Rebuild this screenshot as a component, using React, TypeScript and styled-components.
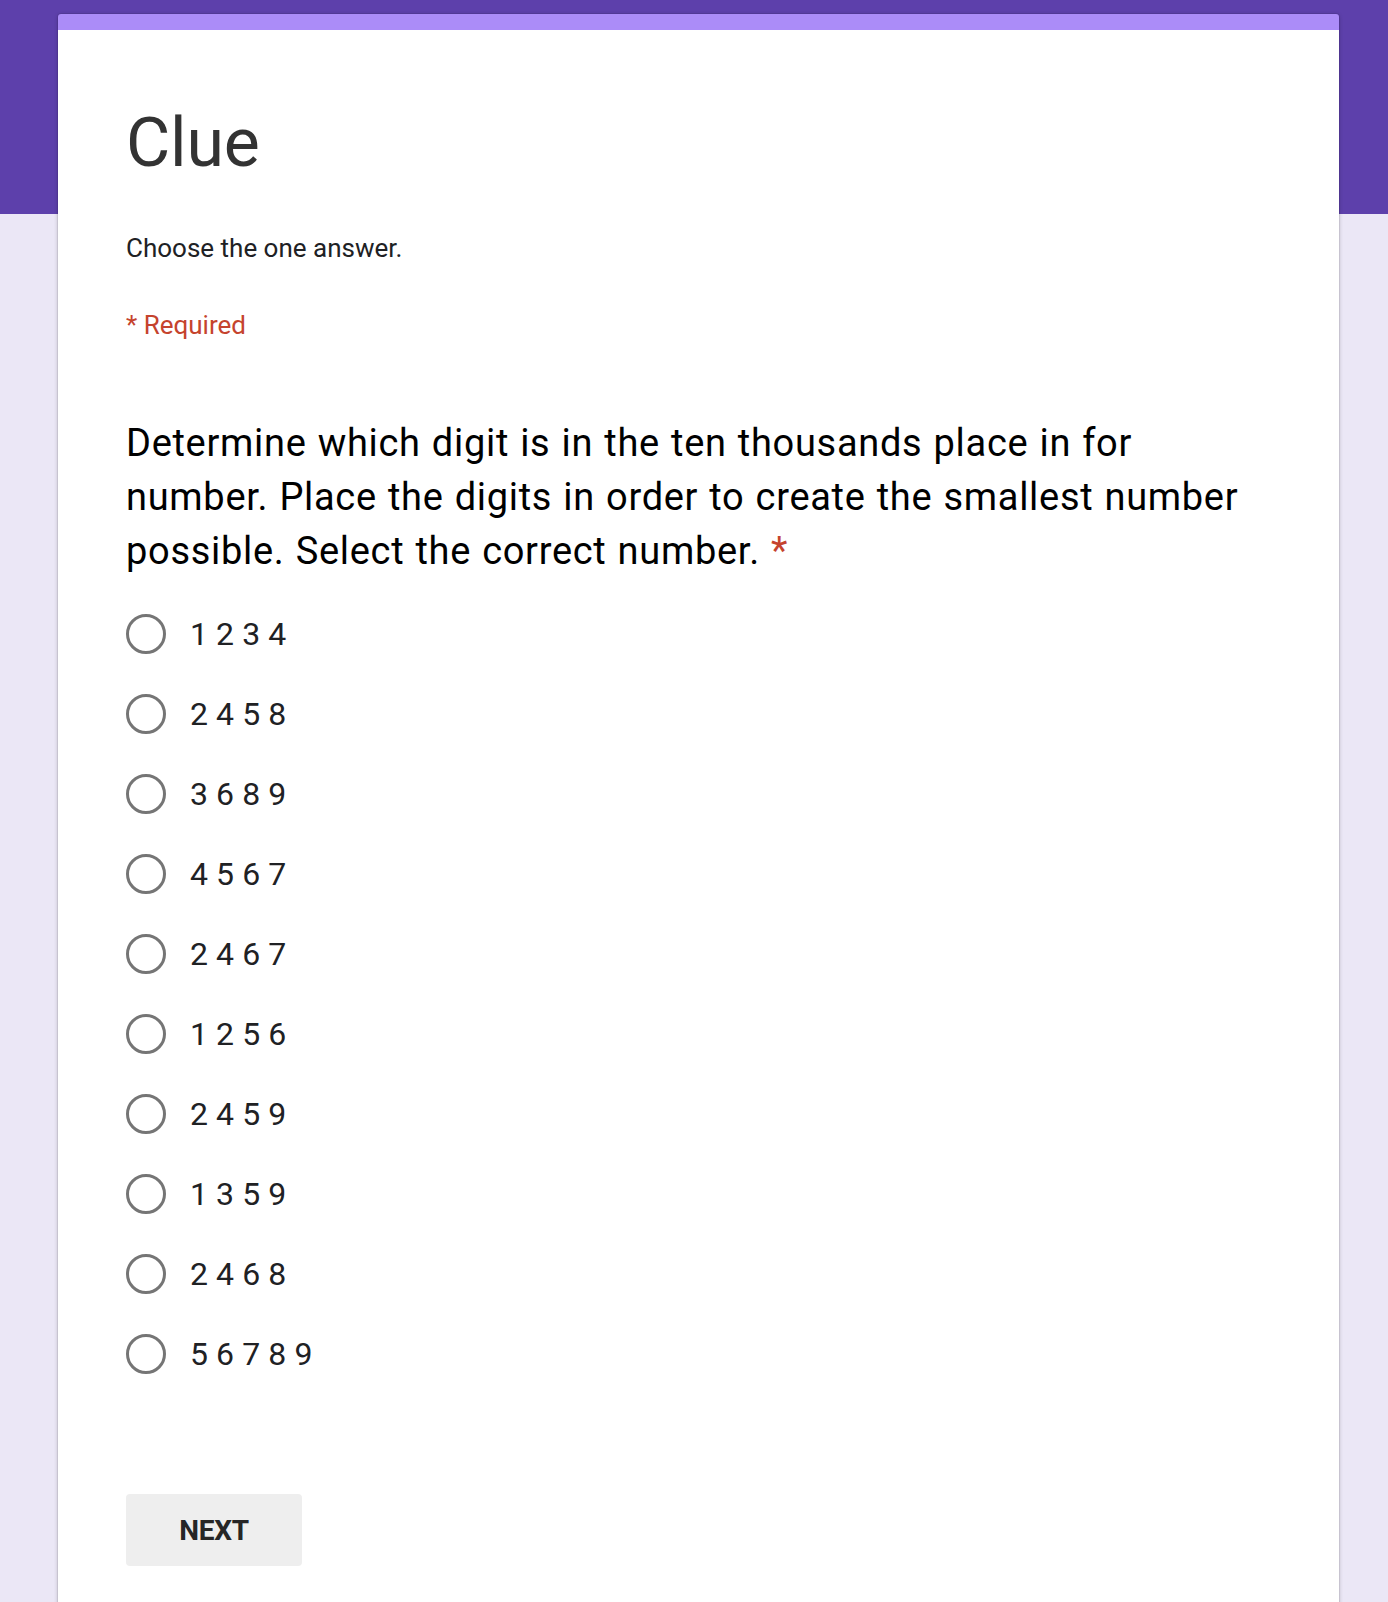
import React from "react";
import styled, { createGlobalStyle } from "styled-components";

const GlobalStyle = createGlobalStyle`
  html, body {
    margin: 0;
    padding: 0;
    background: #ebe7f6;
  }
  body {
    font-family: Roboto, "Noto Sans", "Liberation Sans", sans-serif;
    -webkit-font-smoothing: antialiased;
  }
`;

const Page = styled.div`
  min-height: 1602px;
  background: linear-gradient(#5d40ab 0, #5d40ab 214px, #ebe7f6 214px);
  padding: 14px 49px 0 58px;
  box-sizing: border-box;
  overflow: hidden;
`;

const Card = styled.div`
  width: 1281px;
  background: #ffffff;
  border-radius: 3px 3px 0 0;
  border-top: 16px solid #ab8cf8;
  box-shadow: 0 0 0 1px rgba(0, 0, 0, 0.06), 0 1px 4px rgba(0, 0, 0, 0.24);
  padding: 73px 68px 80px 68px;
  box-sizing: border-box;
`;

const Title = styled.h1`
  margin: 0;
  font-size: 68px;
  line-height: 80px;
  font-weight: 400;
  color: #333333;
  letter-spacing: -0.2px;
`;

const Description = styled.p`
  margin: 49px 0 0;
  font-size: 26px;
  line-height: 32px;
  color: #202124;
`;

const RequiredNote = styled.p`
  margin: 45px 0 0;
  font-size: 26px;
  line-height: 32px;
  color: #c5432d;
`;

const Question = styled.h2`
  margin: 75px 0 0;
  max-width: 1130px;
  font-size: 38px;
  line-height: 54px;
  font-weight: 400;
  color: #000000;
  letter-spacing: 0.7px;
  word-spacing: 1px;
`;

const Asterisk = styled.span`
  color: #c5432d;
`;

const Options = styled.div`
  margin-top: 16px;
  display: flex;
  flex-direction: column;
`;

const OptionRow = styled.label`
  height: 80px;
  display: flex;
  align-items: center;
  gap: 24px;
  cursor: pointer;
`;

const Radio = styled.span`
  width: 40px;
  height: 40px;
  border: 3px solid #757575;
  border-radius: 50%;
  box-sizing: border-box;
  flex: none;
`;

const OptionLabel = styled.span`
  font-size: 32px;
  line-height: 40px;
  color: #202124;
  letter-spacing: 0.1px;
`;

const NextButton = styled.button`
  margin-top: 100px;
  width: 176px;
  height: 72px;
  border: none;
  border-radius: 4px;
  background: #eeeeee;
  font-family: Roboto, "Noto Sans", "Liberation Sans", sans-serif;
  font-size: 28px;
  font-weight: 700;
  color: #262626;
  letter-spacing: -0.3px;
  cursor: pointer;
`;

const options = [
  "1 2 3 4",
  "2 4 5 8",
  "3 6 8 9",
  "4 5 6 7",
  "2 4 6 7",
  "1 2 5 6",
  "2 4 5 9",
  "1 3 5 9",
  "2 4 6 8",
  "5 6 7 8 9",
];

export default function App() {
  return (
    <>
      <GlobalStyle />
      <Page>
        <Card>
          <Title>Clue</Title>
          <Description>Choose the one answer.</Description>
          <RequiredNote>* Required</RequiredNote>
          <Question>
            Determine which digit is in the ten thousands place in for number.
            Place the digits in order to create the smallest number possible.
            Select the correct number. <Asterisk>*</Asterisk>
          </Question>
          <Options>
            {options.map((o) => (
              <OptionRow key={o}>
                <Radio />
                <OptionLabel>{o}</OptionLabel>
              </OptionRow>
            ))}
          </Options>
          <NextButton>NEXT</NextButton>
        </Card>
      </Page>
    </>
  );
}
